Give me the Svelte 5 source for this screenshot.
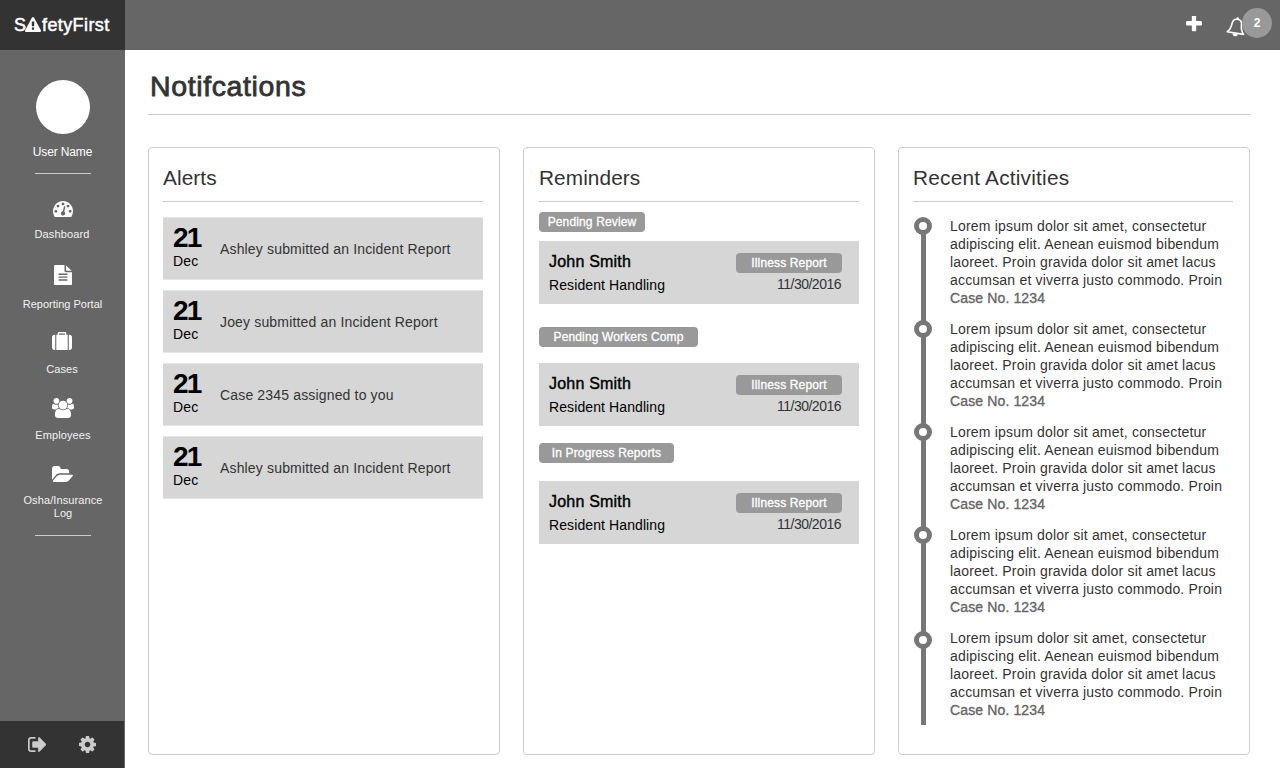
<script>
  const nav = [
    {
      label: 'Dashboard', cls: 'dashboard', box: '0 256 1792 1408', w: 20, h: 16,
      d: 'M384 1152q0-53-37.5-90.5t-90.5-37.5-90.5 37.5-37.5 90.5 37.5 90.5 90.5 37.5 90.5-37.5 37.5-90.5zm192-448q0-53-37.5-90.5t-90.5-37.5-90.5 37.5-37.5 90.5 37.5 90.5 90.5 37.5 90.5-37.5 37.5-90.5zm428 481l101-382q6-26-7.5-48.5t-38.5-29.5-48 6.5-30 39.5l-101 382q-60 5-107 43.5t-63 98.5q-20 77 20 146t117 89 146-20 89-117q16-60-6-117t-72-91zm660-33q0-53-37.5-90.5t-90.5-37.5-90.5 37.5-37.5 90.5 37.5 90.5 90.5 37.5 90.5-37.5 37.5-90.5zm-640-640q0-53-37.5-90.5t-90.5-37.5-90.5 37.5-37.5 90.5 37.5 90.5 90.5 37.5 90.5-37.5 37.5-90.5zm448 192q0-53-37.5-90.5t-90.5-37.5-90.5 37.5-37.5 90.5 37.5 90.5 90.5 37.5 90.5-37.5 37.5-90.5zm320 448q0 261-141 483-19 29-54 29h-1402q-35 0-54-29-141-221-141-483 0-182 71-348t191-286 286-191 348-71 348 71 286 191 191 286 71 348z'
    },
    {
      label: 'Reporting Portal', cls: 'portal', box: '128 0 1536 1792', w: 18, h: 20,
      d: 'M1596 476q14 14 28 36h-472v-472q22 14 36 28zm-476 164h544v1056q0 40-28 68t-68 28h-1344q-40 0-68-28t-28-68v-1600q0-40 28-68t68-28h800v544q0 40 28 68t68 28zm160 736v-64q0-14-9-23t-23-9h-704q-14 0-23 9t-9 23v64q0 14 9 23t23 9h704q14 0 23-9t9-23zm0-256v-64q0-14-9-23t-23-9h-704q-14 0-23 9t-9 23v64q0 14 9 23t23 9h704q14 0 23-9t9-23zm0-256v-64q0-14-9-23t-23-9h-704q-14 0-23 9t-9 23v64q0 14 9 23t23 9h704q14 0 23-9t9-23z'
    },
    {
      label: 'Cases', cls: 'cases', box: '0 0 1792 1664', w: 20, h: 18,
      d: 'M640 256h512v-128h-512v128zm-352 0v1408h-64q-92 0-158-66t-66-158v-960q0-92 66-158t158-66h64zm1120 0v1408h-1024v-1408h128v-160q0-40 28-68t68-28h576q40 0 68 28t28 68v160h128zm384 224v960q0 92-66 158t-158 66h-64v-1408h64q92 0 158 66t66 158z'
    },
    {
      label: 'Employees', cls: 'employees', box: '0 0 1920 1792', w: 22, h: 20,
      d: 'M593 896q-162 5-265 128h-134q-82 0-138-40.5t-56-118.5q0-353 124-353 6 0 43.5 21t97.5 42.5 119 21.5q67 0 133-23-5 37-5 66 0 139 81 256zm1071 637q0 120-73 189.5t-194 69.5h-874q-121 0-194-69.5t-73-189.5q0-53 3.5-103.5t14-109 26.5-108.5 43-97.5 62-81 85.5-53.5 111.5-20q10 0 43 21.5t73 48 107 48 135 21.5 135-21.5 107-48 73-48 43-21.5q61 0 111.5 20t85.5 53.5 62 81 43 97.5 26.5 108.5 14 109 3.5 103.5zm-1024-1277q0 106-75 181t-181 75-181-75-75-181 75-181 181-75 181 75 75 181zm704 384q0 159-112.5 271.5t-271.5 112.5-271.5-112.5-112.5-271.5 112.5-271.5 271.5-112.5 271.5 112.5 112.5 271.5zm576 225q0 78-56 118.5t-138 40.5h-134q-103-123-265-128 81-117 81-256 0-29-5-66 66 23 133 23 59 0 119-21.5t97.5-42.5 43.5-21q124 0 124 353zm-128-609q0 106-75 181t-181 75-181-75-75-181 75-181 181-75 181 75 75 181z'
    },
    {
      label: 'Osha/Insurance Log', cls: 'log', box: '0 128 1879 1408', w: 21, h: 16,
      d: 'M1879 952q0 31-31 66l-336 396q-43 51-120.5 86.5t-143.5 35.5h-1088q-34 0-60.5-13t-26.5-43q0-31 31-66l336-396q43-51 120.5-86.5t143.5-35.5h1088q34 0 60.5 13t26.5 43zm-343-344v160h-832q-94 0-197 47.5t-164 119.5l-337 396-5 6q0-4-.5-12.5t-.5-12.5v-960q0-92 66-158t158-66h320q92 0 158 66t66 158v32h544q92 0 158 66t66 158z'
    }
  ];

  const alerts = [
    'Ashley submitted an Incident Report',
    'Joey submitted an Incident Report',
    'Case 2345 assigned to you',
    'Ashley submitted an Incident Report'
  ];

  const reminders = [
    { group: 'Pending Review', cls: 'review' },
    { group: 'Pending Workers Comp', cls: 'comp' },
    { group: 'In Progress Reports', cls: 'progress' }
  ];

  const lines = [
    'Lorem ipsum dolor sit amet, consectetur',
    'adipiscing elit. Aenean euismod bibendum',
    'laoreet. Proin gravida dolor sit amet lacus',
    'accumsan et viverra justo commodo. Proin'
  ];
  const activities = [1, 2, 3, 4, 5];
</script>

<div class="app">
  <aside>
    <div class="logo">
      <span>S</span>
      <svg width="16" height="15" viewBox="0 0 1792 1664" preserveAspectRatio="none"><path d="M1024 1375v-190q0-14-9.5-23.5t-22.5-9.5h-192q-13 0-22.5 9.5t-9.5 23.5v190q0 14 9.5 23.5t22.5 9.5h192q13 0 22.5-9.5t9.5-23.5zm-2-374l18-459q0-12-10-19-13-11-24-11h-220q-11 0-24 11-10 7-10 21l17 457q0 10 10 16.5t24 6.5h185q14 0 23.5-6.5t10.5-16.5zm-14-934l768 1408q35 63-2 126-17 29-46.5 46t-63.5 17h-1536q-34 0-63.5-17t-46.5-46q-37-63-2-126l768-1408q17-31 47-49t65-18 65 18 47 49z" /></svg>
      <span>fetyFirst</span>
    </div>
    <div class="avatar"></div>
    <div class="user">User Name</div>
    <hr />
    <nav>
      {#each nav as item}
        <a class={item.cls}>
          <svg width={item.w} height={item.h} viewBox={item.box} preserveAspectRatio="none"><path d={item.d} /></svg>
          <span>{item.label}</span>
        </a>
      {/each}
    </nav>
    <hr class="last" />
    <div class="tools">
      <svg width="18" height="15" viewBox="64 256 1568 1280" preserveAspectRatio="none"><path class="exit" d="M704 1440q0 4 1 20t.5 26.5-3 23.5-10 19.5-20.5 6.5h-320q-119 0-203.5-84.5t-84.5-203.5v-704q0-119 84.5-203.5t203.5-84.5h320q13 0 22.5 9.5t9.5 22.5q0 4 1 20t.5 26.5-3 23.5-10 19.5-20.5 6.5h-320q-66 0-113 47t-47 113v704q0 66 47 113t113 47h312l11.5 1 11.5 3 8 5.5 7 9 2 13.5zm928-544q0 26-19 45l-544 544q-19 19-45 19t-45-19-19-45v-288h-448q-26 0-45-19t-19-45v-384q0-26 19-45t45-19h448v-288q0-26 19-45t45-19 45 19l544 544q19 19 19 45z" /></svg>
      <svg width="17" height="17" viewBox="128 128 1536 1536"><path d="M1152 896q0-106-75-181t-181-75-181 75-75 181 75 181 181 75 181-75 75-181zm512-109v222q0 12-8 23t-20 13l-185 28q-19 54-39 91 35 50 107 138 10 12 10 25t-9 23q-27 37-99 108t-94 71q-12 0-26-9l-138-108q-44 23-91 38-16 136-29 186-7 28-36 28h-222q-14 0-24.5-8.5t-11.5-21.5l-28-184q-49-16-90-37l-141 107q-10 9-25 9-14 0-25-11-126-114-165-168-7-10-7-23 0-12 8-23 15-21 51-66.5t54-70.5q-27-50-41-99l-183-27q-13-2-21-12.5t-8-23.5v-222q0-12 8-23t19-13l186-28q14-46 39-92-40-57-107-138-10-12-10-24 0-10 9-23 26-36 98.5-107.5t94.5-71.5q13 0 26 10l138 107q44-23 91-38 16-136 29-186 7-28 36-28h222q14 0 24.5 8.5t11.5 21.5l28 184q49 16 90 37l142-107q9-9 24-9 13 0 25 10 129 119 165 170 7 8 7 22 0 12-8 23-15 21-51 66.5t-54 70.5q26 50 41 98l183 28q13 2 21 12.5t8 23.5z" /></svg>
    </div>
  </aside>

  <div class="page">
    <header>
      <svg class="plus" width="16" height="16" viewBox="192 192 1408 1408"><path d="M1600 736v192q0 40-28 68t-68 28h-416v416q0 40-28 68t-68 28h-192q-40 0-68-28t-28-68v-416h-416q-40 0-68-28t-28-68v-192q0-40 28-68t68-28h416v-416q0-40 28-68t68-28h192q40 0 68 28t28 68v416h416q40 0 68 28t28 68z" /></svg>
      <div class="bell">
        <svg width="22" height="22" viewBox="0 0 22 22">
          <g transform="translate(.8 .3) rotate(9 11 11)">
            <path class="outline" d="M10.500 3c-3.400 0-4.700 2.500-4.800 5.200-.1 4-1 6.300-3.500 8.700h16.600c-2.500-2.400-3.400-4.700-3.500-8.700-.1-2.700-1.400-5.200-4.800-5.200z" />
            <circle cx="10.500" cy="2.200" r="1.200" />
            <path d="M7.900 17.500h5.200a2.600 2.600 0 0 1-5.200 0z" />
          </g>
        </svg>
        <span class="count">2</span>
      </div>
    </header>

    <main>
      <h1>Notifcations</h1>
      <div class="columns">
        <section>
          <h2>Alerts</h2>
          <div class="alerts">
            {#each alerts as text}
              <div class="alert">
                <div class="date"><b>21</b><span>Dec</span></div>
                <p>{text}</p>
              </div>
            {/each}
          </div>
        </section>

        <section class="reminders">
          <h2>Reminders</h2>
          {#each reminders as r}
            <div class="group {r.cls}">
              <span class="pill">{r.group}</span>
              <div class="reminder">
                <div class="who"><b>John Smith</b><span>Resident Handling</span></div>
                <div class="what"><span class="pill">Illness Report</span><time>11/30/2016</time></div>
              </div>
            </div>
          {/each}
        </section>

        <section>
          <h2 class="wide">Recent Activities</h2>
          <div class="timeline">
            {#each activities as a}
              <div class="activity">
                <div class="rail"><i></i></div>
                <div class="text">
                  {#each lines as line}<div>{line}</div>{/each}
                  <div class="case">Case No. 1234</div>
                </div>
              </div>
            {/each}
          </div>
        </section>
      </div>
    </main>
  </div>
</div>

<style>
  :global(body) { margin: 0; background: #fff; }
  .app {
    display: flex; width: 1280px; height: 768px; overflow: hidden;
    font-family: "Liberation Sans", Arial, sans-serif; color: #333; box-sizing: border-box;
  }
  .app :global(*) { box-sizing: border-box; }
  svg { display: block; fill: currentColor; flex: none; }

  aside {
    width: 125px; flex: none; background: #666; color: #fff;
    display: flex; flex-direction: column; align-items: center;
  }
  .logo {
    width: 125px; height: 50px; flex: none; background: #333; padding-left: 14px;
    display: flex; align-items: center; font-size: 18px; letter-spacing: .4px;
    -webkit-text-stroke: .5px #fff;
  }
  .logo span:first-child { width: 11px; }
  .logo svg { margin-right: 1px; margin-top: -2px; }
  .avatar { width: 54px; height: 54px; border-radius: 50%; background: #fff; margin-top: 30px; flex: none; }
  .user { font-size: 12px; line-height: 16px; letter-spacing: -.15px; margin-top: 10px; }
  hr { width: 56px; height: 1px; border: 0; background: #ccc; margin: 13px 0 0; flex: none; }
  nav { display: flex; flex-direction: column; align-items: center; }
  nav a { display: flex; flex-direction: column; align-items: center; width: 95px; font-size: 11px; line-height: 13px; letter-spacing: .1px; text-align: center; }
  nav span { color: #f2f2f2; }
  .dashboard { margin-top: 27px; }
  .dashboard span { margin: 11px 1px 0 0; letter-spacing: .15px; }
  .portal { margin-top: 24px; }
  .portal span { margin-top: 13px; letter-spacing: 0; }
  .cases { margin-top: 21px; }
  .cases svg, .log svg { margin-right: 1px; }
  .cases span { margin: 13px 1px 0 0; }
  .employees { margin-top: 22px; }
  .employees span { margin: 11px 0 0 1px; }
  .log { margin-top: 24px; }
  .log span { margin: 12px 0 0 1px; }
  hr.last { margin-top: 15px; }
  .tools {
    width: 124px; height: 47px; margin-top: auto; align-self: flex-start; background: #333; color: #ccc;
    display: flex; align-items: center; padding-left: 28px; gap: 33px;
  }
  .exit { stroke: currentColor; stroke-width: 40; }

  .page { flex: 1; display: flex; flex-direction: column; min-width: 0; }
  header {
    height: 50px; flex: none; background: #666; color: #fff;
    display: flex; justify-content: flex-end; padding: 16px 8px 0 0;
  }
  .plus { margin-right: 23px; }
  .bell { position: relative; width: 47px; height: 22px; }
  .outline { fill: none; stroke: #fff; stroke-width: 1.600; stroke-linejoin: round; }
  .count {
    position: absolute; right: 0; top: -8px; width: 30px; height: 30px; border-radius: 50%;
    background: #999; font-size: 12px; font-weight: 700; line-height: 30px; text-align: center;
  }

  main { flex: 1; padding: 0 30px 13px 23px; display: flex; flex-direction: column; }
  h1 {
    margin: 0; height: 65px; padding: 20px 0 0 2px; border-bottom: 1px solid #ccc;
    font-size: 28.500px; line-height: 32px; font-weight: 400; letter-spacing: .62px; -webkit-text-stroke: .8px #333;
  }
  .columns { flex: 1; display: grid; grid-template-columns: repeat(3, 352px); gap: 23px; margin-top: 32px; }
  section { border: 1px solid #ccc; border-radius: 4px; padding: 0 16px 0 14px; }
  section.reminders { padding: 0 15px; }
  h2 {
    margin: 0; height: 54px; padding-top: 18px; border-bottom: 1px solid #ccc;
    font-size: 20.800px; line-height: 24px; font-weight: 400; letter-spacing: .08px;
  }
  h2.wide { letter-spacing: .22px; }

  .alerts { display: grid; gap: 10px; margin-top: 15px; }
  .alert {
    height: 63px; background: #d6d6d6; border: solid #e6e6e6; border-width: 1px 0;
    display: flex; align-items: center; padding-left: 10px; font-size: 14px;
  }
  .date { width: 47px; display: flex; flex-direction: column; color: #000; line-height: 16px; letter-spacing: .2px; padding-bottom: 6px; }
  .date b { font-size: 28px; line-height: 30px; letter-spacing: -1.700px; font-weight: 700; }
  .alert p { margin: 0; letter-spacing: .16px; }

  .pill {
    display: block; height: 20px; width: 106px; border-radius: 4px; background: #999; color: #fff;
    font-size: 12px; line-height: 20px; text-align: center; letter-spacing: .14px; -webkit-text-stroke: .3px #fff;
  }
  .review { margin-top: 10px; }
  .comp { margin-top: 23px; }
  .progress { margin-top: 17px; }
  .comp > .pill { width: 159px; }
  .progress > .pill { width: 135px; }
  .reminder {
    height: 63px; background: #d6d6d6; display: flex; justify-content: space-between;
    padding: 12px 17px 0 10px;
  }
  .review .reminder { margin-top: 9px; }
  .comp .reminder { margin-top: 16px; }
  .progress .reminder { margin-top: 18px; }
  .who { color: #000; font-size: 14px; line-height: 16px; letter-spacing: .1px; }
  .who b { display: block; font-size: 16px; line-height: 18px; font-weight: 400; letter-spacing: .2px; -webkit-text-stroke: .4px #000; }
  .who span { display: block; margin-top: 6px; }
  .what time { display: block; text-align: right; font-size: 14px; line-height: 16px; letter-spacing: -.5px; margin-top: 3px; padding-right: 1px; }

  .timeline { margin-top: 15px; }
  .activity { display: flex; height: 103px; }
  .rail { width: 18px; margin: 0 18px 0 1px; display: flex; flex-direction: column; align-items: center; }
  .rail i { width: 18px; height: 18px; border: 5px solid #777; border-radius: 50%; flex: none; }
  .rail::after { content: ""; width: 5px; flex: 1; background: #777; margin: -1px 0 -3px 1px; }
  .activity:last-child { height: 96px; }
  .activity:last-child .rail { padding-top: 2px; }
  .activity:last-child .rail::after { margin-bottom: 0; }
  .text { font-size: 14px; line-height: 18px; letter-spacing: .19px; white-space: nowrap; }
  .case { color: #666; letter-spacing: .13px; -webkit-text-stroke: .35px #666; }
</style>
